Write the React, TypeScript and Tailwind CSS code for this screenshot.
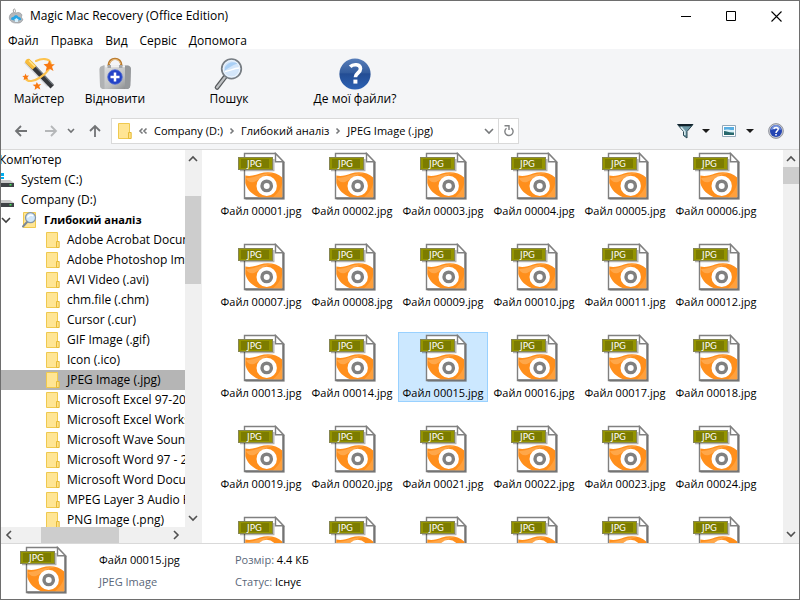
import { clsx } from 'clsx';

const MENU = ['Файл', 'Правка', 'Вид', 'Сервіс', 'Допомога'];

const FOLDERS = [
  'Adobe Acrobat Document (.pdf)',
  'Adobe Photoshop Image (.psd)',
  'AVI Video (.avi)',
  'chm.file (.chm)',
  'Cursor (.cur)',
  'GIF Image (.gif)',
  'Icon (.ico)',
  'JPEG Image (.jpg)',
  'Microsoft Excel 97-2003 (.xls)',
  'Microsoft Excel Worksheet (.xlsx)',
  'Microsoft Wave Sound (.wav)',
  'Microsoft Word 97 - 2003 (.doc)',
  'Microsoft Word Document (.docx)',
  'MPEG Layer 3 Audio File (.mp3)',
  'PNG Image (.png)',
];

const SELECTED_FOLDER = 'JPEG Image (.jpg)';
const SELECTED_FILE = 15;

const FILES = Array.from({ length: 30 }, (_, i) => i + 1);

/* ---------- icons ---------- */

function JpgIcon() {
  return (
    <svg width="48" height="48" viewBox="0 0 48 48" aria-hidden="true" className="shrink-0">
      <path d="M9 3.5H41L48 11V48H9z" fill="#000" opacity="0.15" />
      <path d="M7.5 1.5H38.5L46.5 10V46.5H7.5z" fill="#fff" stroke="#808080" strokeWidth="1.4" />
      <path d="M46.3 10V46.3H8" fill="none" stroke="#747474" strokeWidth="2" />
      <path
        d="M8.3 23.5C13 24.5 18 23.5 23 21.5C31 18.8 40 20.5 45.2 25.5V45.3H22C16 43 10 38 8.3 31z"
        fill="#ff8f1c"
      />
      <path d="M9 26C19 26 25 20 36 21.5C27 22 24 27 17 30C13 31 10 29 9 26z" fill="#ffb05c" opacity="0.7" />
      <path d="M45.2 31V45.3H36C41 41 44 37 45.2 31z" fill="#ffab52" opacity="0.6" />
      <circle cx="29.7" cy="33.9" r="10.2" fill="#fff" />
      <circle cx="29.7" cy="33.9" r="4.7" fill="none" stroke="#808080" strokeWidth="3.4" />
      <path d="M38.5 1.5V9.8H46.5z" fill="#fff" stroke="#808080" strokeWidth="1.4" />
      <path d="M3 18.5H36.8V7" fill="none" stroke="#000" strokeWidth="1.4" opacity="0.3" />
      <rect x="1.5" y="5.5" width="34" height="12" fill="#949400" stroke="#858550" />
      <rect x="4" y="7" width="28" height="9" fill="#7c7c00" />
      <text x="10" y="15" fontSize="9" fill="#fff" fontFamily="DejaVu Sans, sans-serif">
        JPG
      </text>
    </svg>
  );
}

function FolderIcon() {
  return (
    <svg width="14" height="16" viewBox="0 0 14 16" aria-hidden="true" className="shrink-0">
      <path d="M0.5 0.5H11.5V15.5H0.5z" fill="#ffe594" stroke="#efc94f" />
      <path d="M10.5 9.5H13.2V15.5H10.5z" fill="#ffe085" stroke="#e6bb37" />
    </svg>
  );
}

function DriveIcon({ system }: { system?: boolean }) {
  return (
    <svg width="13" height="16" viewBox="0 0 13 16" aria-hidden="true" className="shrink-0">
      {system && <path d="M0 1H3V4H0zM0 5H3V7H0z" fill="#00adef" />}
      <path d="M0 8H9L13 11H0z" fill="#c9c9c9" />
      <path d="M0 11H13V15H0z" fill="#3f4246" />
      <path d="M8.5 12H10.5V13.5H8.5z" fill="#46e05d" />
    </svg>
  );
}

function AnalysisIcon() {
  return (
    <svg width="16" height="18" viewBox="0 0 16 18" aria-hidden="true" className="shrink-0">
      <path d="M2.5 1.5H14.5V16.5H2.5z" fill="#ffe594" stroke="#efc94f" />
      <path d="M6.5 10.5L2 15.5" stroke="#7c8794" strokeWidth="2" strokeLinecap="round" />
      <circle cx="9.5" cy="6.7" r="5" fill="#cfe6fb" stroke="#8395a8" strokeWidth="1.2" />
      <path d="M6.5 6.5C7.5 4 10.5 3.4 12 5" fill="none" stroke="#fff" strokeWidth="1.4" />
    </svg>
  );
}

function AppIcon() {
  return (
    <svg width="16" height="16" viewBox="0 0 16 16" aria-hidden="true">
      <path d="M6 4.5C4.5 2.5 5.5 1 6.5 1C7.5 1.5 7.5 3 7.3 4.3" fill="none" stroke="#9c9c9c" />
      <path
        d="M8 5C10.5 3.8 13 4.8 14 7C13 8.5 13.5 10.5 15 11.5C13.8 14.4 11.5 15.5 8.5 15C4.5 15.2 1.5 13 1.3 9.8C1.3 6 4.8 3.6 8 5z"
        fill="#b5b8bb"
        stroke="#8b8f94"
        strokeWidth="0.6"
      />
      <path d="M3 11.5C3 9 5 9 5.5 9C6 7 9.5 6.4 10.5 9C12.5 9 13.4 10.5 13 12C9 12.5 5 12.5 3 11.5z" fill="#28a5e5" />
      <path d="M7 12V14H10V12L11 12L8.4 10L6 12z" fill="#d5f0fd" />
    </svg>
  );
}

function WizardIcon() {
  return (
    <svg width="34" height="34" viewBox="0 0 34 34" aria-hidden="true">
      <path d="M2 6L6 3L28 27L25 30z" fill="#c9ccd0" opacity="0.7" />
      <path d="M7.5 2.5L32 28L28.5 31.5L4 6z" fill="#34373b" />
      <path d="M9 4.5L31 27.5" stroke="#777c82" strokeWidth="1.2" />
      <path d="M7.5 2L14.5 9L10.5 12.5L3 5.5C3 3 5.5 1.4 7.5 2z" fill="#f8bd3d" />
      <path d="M7 3.5L13 9.5" stroke="#ffe58d" strokeWidth="1.6" />
      <path
        d="M14 4C20 1 27 1.5 28.5 5.5C30 9.5 25 16 18 20.5C12 24.5 5.5 25.5 3.5 21.5"
        fill="none"
        stroke="#fdc34f"
        strokeWidth="2.1"
        strokeLinecap="round"
      />
      <path d="M27.6 3.4L29 7.2L32.8 7.2L30 9.8L31.5 14L27.5 11.7L23.7 14.2L24.7 10L21.5 7.3L25.6 6.8z" fill="#f87912" />
      <path d="M3.5 16.5L4.5 18.7L7 18.6L5.3 20.4L6.2 22.8L3.8 21.7L1.6 23.2L2.1 20.6L0.3 19L2.7 18.7z" fill="#f87912" />
      <path d="M14.8 25L16.2 27.4L19.2 27L17.2 29.3L18.4 32.4L15.3 31.1L12.6 33L13.2 29.8L10.6 27.8L13.8 27.6z" fill="#f87912" />
    </svg>
  );
}

function RecoverIcon() {
  return (
    <svg width="34" height="34" viewBox="0 0 34 34" aria-hidden="true">
      <defs>
        <linearGradient id="case" x1="0" y1="0" x2="1" y2="1">
          <stop offset="0" stopColor="#e4e4e4" />
          <stop offset="0.6" stopColor="#bfc1c2" />
          <stop offset="1" stopColor="#7e8083" />
        </linearGradient>
      </defs>
      <path d="M10.5 9C10.5 -0.5 23.5 -0.5 23.5 9" fill="none" stroke="#b97a2c" strokeWidth="2.4" />
      <path d="M11.5 7C12.5 0.8 21.5 0.8 22.5 7" fill="none" stroke="#edc184" />
      <path d="M4 9Q1.5 9.5 1.5 12L2 29Q2.2 31.5 5 32H29Q32 31.5 32.2 29L33 12Q32.8 9 30 8.5Z" fill="url(#case)" />
      <path d="M4 9L6.5 8V32L4.5 32Q2.2 31 2 29L1.5 12Q1.5 9.5 4 9z" fill="#b0b2b4" />
      <path d="M27 8.5H30Q32.8 9 33 12L32.2 29Q31.8 31.5 29 32H27z" fill="#95989b" />
      <path d="M7 9.5H27" stroke="#f1f1f1" strokeWidth="1.4" />
      <path d="M9.5 8H13V11H9.5zM21 8H24.5V11H21z" fill="#a5a7aa" />
      <circle cx="17" cy="20" r="7.3" fill="#2343c7" stroke="#566fd0" strokeWidth="0.8" />
      <path d="M17 15.5V24.5M12.5 20H21.5" stroke="#fff" strokeWidth="2.5" />
    </svg>
  );
}

function SearchIcon() {
  return (
    <svg width="34" height="34" viewBox="0 0 34 34" aria-hidden="true">
      <path d="M13 20L5 30.5" stroke="#55585b" strokeWidth="4.6" strokeLinecap="round" />
      <path d="M13.5 19.5L5 30.5" stroke="#bfc2c4" strokeWidth="2.2" strokeLinecap="round" />
      <circle cx="19.5" cy="11.8" r="9.8" fill="#d4e6fa" stroke="#777d83" strokeWidth="1.7" />
      <circle cx="19.5" cy="11.8" r="8.2" fill="none" stroke="#f8fafc" strokeWidth="0.8" />
      <path d="M13 10C16 5 21 4 25.5 6.5C20 8.5 16 11 12.7 14z" fill="#a9cff5" />
      <path d="M13 14.5C18 14 21 11.5 27 11" fill="none" stroke="#fff" strokeWidth="1.4" />
    </svg>
  );
}

function WhereIcon() {
  return (
    <svg width="34" height="34" viewBox="0 0 34 34" aria-hidden="true">
      <defs>
        <linearGradient id="where" x1="0" y1="0" x2="0" y2="1">
          <stop offset="0" stopColor="#587eb9" />
          <stop offset="0.45" stopColor="#345d9e" />
          <stop offset="0.5" stopColor="#234d94" />
          <stop offset="1" stopColor="#2d62b4" />
        </linearGradient>
      </defs>
      <circle cx="17" cy="17" r="15.6" fill="url(#where)" />
      <path
        d="M12.2 9.8C15 6.8 22.5 6.8 22.5 11.8C22.5 16 17.4 16 17.4 20.2"
        fill="none"
        stroke="#fff"
        strokeWidth="3.6"
      />
      <path d="M15.4 22.6H19.4V26.6H15.4z" fill="#fff" />
    </svg>
  );
}

function ArrowIcon({ dir }: { dir: 'left' | 'right' | 'up' }) {
  const d = {
    left: 'M13 7H2M7 2L2 7L7 12',
    right: 'M1 7H12M7 2L12 7L7 12',
    up: 'M7 13V2M2 7L7 2L12 7',
  }[dir];
  return (
    <svg width="14" height="14" viewBox="0 0 14 14" aria-hidden="true">
      <path d={d} fill="none" stroke={dir === 'right' ? '#b5b7b9' : '#717375'} strokeWidth="1.8" />
    </svg>
  );
}

function Chevron({ className, path }: { className?: string; path: string }) {
  return (
    <svg width="10" height="10" viewBox="0 0 10 10" aria-hidden="true" className={clsx('shrink-0', className)}>
      <path d={path} fill="none" stroke="currentColor" strokeWidth="1.6" />
    </svg>
  );
}

const DOWN = 'M1 3L5 7L9 3';
const UP = 'M1 7L5 3L9 7';
const LEFT = 'M7 1L3 5L7 9';
const RIGHT = 'M3 1L7 5L3 9';
const CRUMB = 'M3.5 2.5L6 5L3.5 7.5';

function RefreshIcon() {
  return (
    <svg width="12" height="14" viewBox="0 0 12 14" aria-hidden="true">
      <path d="M8.3 4.1A4.1 4.1 0 1 1 3.5 4.2" fill="none" stroke="#808284" strokeWidth="1.4" />
      <path d="M1.5 1.7H6V6" fill="none" stroke="#808284" strokeWidth="1.4" />
    </svg>
  );
}

function FilterIcon() {
  return (
    <svg width="17" height="16" viewBox="0 0 17 16" aria-hidden="true">
      <path d="M0.5 1.5H16L10 8.5V15L6.5 12.5V8.5z" fill="#6d98a6" stroke="#2b4852" />
      <path d="M4 4L7.8 8.5V12" fill="none" stroke="#d5e8ed" strokeWidth="1.6" />
      <path d="M0.5 1H16L14.2 3.3H2.5z" fill="#12222b" />
    </svg>
  );
}

function ViewIcon() {
  return (
    <svg width="14" height="12" viewBox="0 0 14 12" aria-hidden="true">
      <path d="M0.5 0.5H13.5V11.5H0.5z" fill="#fff" stroke="#91a7b8" />
      <path d="M2 2H12V6H2z" fill="#59aee2" />
      <path d="M2 5C5 3.5 8 5.5 12 5V8H2z" fill="#d9f0f7" />
      <path d="M2 6C5 6 7 8 12 7.5V10H2z" fill="#27686d" />
    </svg>
  );
}

function HelpIcon() {
  return (
    <svg width="16" height="16" viewBox="0 0 16 16" aria-hidden="true">
      <circle cx="8" cy="8" r="7.4" fill="#c8cad0" stroke="#7e828e" strokeWidth="0.8" />
      <circle cx="8" cy="8" r="6" fill="#2445b2" />
      <path d="M3 7A5 5 0 0 1 13 7C10 5.5 6 6 3 7z" fill="#7391dd" />
      <path d="M5.8 6C6.4 3.8 10.3 4 10.2 6.3C10.1 8 8 7.8 8 10" fill="none" stroke="#fff" strokeWidth="1.5" />
      <path d="M7.2 11H8.8V12.5H7.2z" fill="#fff" />
    </svg>
  );
}

function Caret() {
  return (
    <svg width="8" height="4" viewBox="0 0 8 4" aria-hidden="true">
      <path d="M0 0H8L4 4z" fill="#1b1b1b" />
    </svg>
  );
}

/* ---------- window parts ---------- */

function TitleBar() {
  return (
    <header className="flex h-[30px] items-center pl-[7px]">
      <AppIcon />
      <h1 className="ml-1.5 flex-1">Magic Mac Recovery (Office Edition)</h1>
      <button aria-label="Згорнути" className="grid h-full w-[45px] place-items-center">
        <svg width="11" height="11" viewBox="0 0 11 11">
          <path d="M0 5.5H10" stroke="#000" />
        </svg>
      </button>
      <button aria-label="Розгорнути" className="grid h-full w-[45px] place-items-center">
        <svg width="11" height="11" viewBox="0 0 11 11">
          <path d="M0.5 0.5H9.5V9.5H0.5z" fill="none" stroke="#000" />
        </svg>
      </button>
      <button aria-label="Закрити" className="grid h-full w-[45px] place-items-center">
        <svg width="11" height="11" viewBox="0 0 11 11">
          <path d="M0.5 0.5L10.5 10.5M10.5 0.5L0.5 10.5" stroke="#000" strokeWidth="1.1" />
        </svg>
      </button>
    </header>
  );
}

function MenuBar() {
  return (
    <nav className="flex h-[18px] items-end gap-3 pl-[7px]">
      {MENU.map((item) => (
        <button key={item}>{item}</button>
      ))}
    </nav>
  );
}

function ToolButton({ icon, label, className }: { icon: React.ReactNode; label: string; className: string }) {
  return (
    <button className={clsx('flex flex-col items-center whitespace-nowrap', className)}>
      {icon}
      <span>{label}</span>
    </button>
  );
}

function Toolbar() {
  return (
    <div className="flex pt-2">
      <ToolButton className="w-[76px]" icon={<WizardIcon />} label="Майстер" />
      <ToolButton className="w-[76px]" icon={<RecoverIcon />} label="Відновити" />
      <ToolButton className="ml-[38px] w-[76px]" icon={<SearchIcon />} label="Пошук" />
      <ToolButton className="ml-[38px] w-[100px]" icon={<WhereIcon />} label="Де мої файли?" />
    </div>
  );
}

function NavBar() {
  return (
    <div className="mt-auto flex items-center pr-[15px] pb-[5px] pl-[13px]">
      <button aria-label="Назад"><ArrowIcon dir="left" /></button>
      <button aria-label="Вперед" className="ml-4"><ArrowIcon dir="right" /></button>
      <button aria-label="Останні розташування" className="ml-2 text-[#717375]">
        <Chevron path="M2 3L5 6L8 3" />
      </button>
      <button aria-label="Вгору" className="ml-3"><ArrowIcon dir="up" /></button>

      <div className="ml-[9px] flex h-[26px] w-[53%] items-center border border-[#d9d9d9] bg-white pl-1.5 text-[11px] whitespace-nowrap">
        <FolderIcon />
        <Chevron path="M4.5 2.5L2 5L4.5 7.5M8.5 2.5L6 5L8.5 7.5" className="ml-1.5 text-[#77797b]" />
        <button className="ml-1.5">Company (D:)</button>
        <Chevron path={CRUMB} className="mx-1 text-[#77797b]" />
        <button>Глибокий аналіз</button>
        <Chevron path={CRUMB} className="mx-1 text-[#77797b]" />
        <button>JPEG Image (.jpg)</button>
        <button aria-label="Попередні розташування" className="mr-1 ml-auto text-[#77797b]">
          <Chevron path={DOWN} />
        </button>
        <button aria-label="Оновити" className="grid h-full w-5 place-items-center border-l border-[#d9d9d9]">
          <RefreshIcon />
        </button>
      </div>

      <div className="ml-auto flex items-center">
        <button aria-label="Фільтр"><FilterIcon /></button>
        <button aria-label="Параметри фільтра" className="ml-2"><Caret /></button>
        <button aria-label="Вигляд" className="ml-3"><ViewIcon /></button>
        <button aria-label="Параметри вигляду" className="ml-2.5"><Caret /></button>
        <button aria-label="Довідка" className="ml-3.5"><HelpIcon /></button>
      </div>
    </div>
  );
}

function FolderTree() {
  return (
    <aside className="flex w-[201px] shrink-0 flex-col border-r border-[#f0f0f0]">
      <div className="flex min-h-0 flex-1">
        <ul className="min-w-0 flex-1 overflow-hidden leading-5 whitespace-nowrap">
          <li className="-ml-0.5 h-5">Комп’ютер</li>
          <li className="flex h-5 items-center gap-[7px]"><DriveIcon system />System (C:)</li>
          <li className="flex h-5 items-center gap-[7px]"><DriveIcon />Company (D:)</li>
          <li>
            <div className="flex h-5 items-center text-[11px] font-bold">
              <Chevron path={DOWN} className="text-[#404040]" />
              <span className="ml-2.5"><AnalysisIcon /></span>
              <span className="ml-[7px]">Глибокий аналіз</span>
            </div>
            <ul>
              {FOLDERS.map((name) => (
                <li key={name}>
                  <button
                    className={clsx(
                      'flex h-5 w-full items-center gap-[7px] pl-[45px]',
                      name === SELECTED_FOLDER && 'bg-[#b5b5b5]',
                    )}
                  >
                    <FolderIcon />
                    {name}
                  </button>
                </li>
              ))}
            </ul>
          </li>
        </ul>
        <div className="flex w-4 flex-col items-center justify-between bg-[#f0f0f0] py-1 text-[#505050]">
          <Chevron path={UP} />
          <div className="mt-8 mb-auto h-[88px] w-full bg-[#cdcdcd]" />
          <Chevron path={DOWN} />
        </div>
      </div>
      <div className="flex h-4 items-center justify-between bg-[#f0f0f0] pr-5 pl-[3px] text-[#505050]">
        <Chevron path={LEFT} />
        <div className="mr-auto ml-[27px] h-full w-[78px] bg-[#cdcdcd]" />
        <Chevron path={RIGHT} />
      </div>
    </aside>
  );
}

function FileItem({ index }: { index: number }) {
  return (
    <button
      className={clsx(
        'flex h-[70px] flex-col items-center border pt-px whitespace-nowrap',
        index === SELECTED_FILE ? 'border-[#99d1ff] bg-[#cce8ff]' : 'border-transparent',
      )}
    >
      <JpgIcon />
      <span className="mt-[3px] text-[11px] leading-4">Файл {String(index).padStart(5, '0')}.jpg</span>
    </button>
  );
}

function FileGrid() {
  return (
    <main className="flex min-w-0 flex-1">
      <div className="grid flex-1 auto-rows-[70px] grid-cols-[repeat(auto-fill,90px)] gap-x-px gap-y-[21px] overflow-hidden pl-3.5">
        {FILES.map((n) => (
          <FileItem key={n} index={n} />
        ))}
      </div>
      <div className="flex w-4 flex-col items-center bg-[#f0f0f0] py-1 text-[#505050]">
        <Chevron path={UP} />
        <div className="mt-[3px] h-[17px] w-full bg-[#cdcdcd]" />
        <Chevron path={DOWN} className="mt-auto" />
      </div>
    </main>
  );
}

function StatusBar() {
  return (
    <footer className="flex h-14 shrink-0 border-t border-[#d9d9d9] pt-0.5 pl-[18px] text-[11px]">
      <JpgIcon />
      <div className="ml-8 w-[136px] pt-[3px] leading-[22px]">
        <p>Файл 00015.jpg</p>
        <p className="text-[#5a6779]">JPEG Image</p>
      </div>
      <div className="pt-[3px] leading-[22px]">
        <p><span className="text-[#5a6779]">Розмір:</span> 4.4 КБ</p>
        <p><span className="text-[#5a6779]">Статус:</span> Існує</p>
      </div>
    </footer>
  );
}

export default function App() {
  return (
    <div className="flex h-screen flex-col overflow-hidden border border-[#6e6e6e] bg-white font-['Open_Sans','Noto_Sans',sans-serif] text-xs text-black">
      <TitleBar />
      <MenuBar />
      <div className="flex h-[101px] shrink-0 flex-col border-b border-[#d9d9d9] bg-[#f4f5f7]">
        <Toolbar />
        <NavBar />
      </div>
      <div className="flex min-h-0 flex-1">
        <FolderTree />
        <FileGrid />
      </div>
      <StatusBar />
    </div>
  );
}
